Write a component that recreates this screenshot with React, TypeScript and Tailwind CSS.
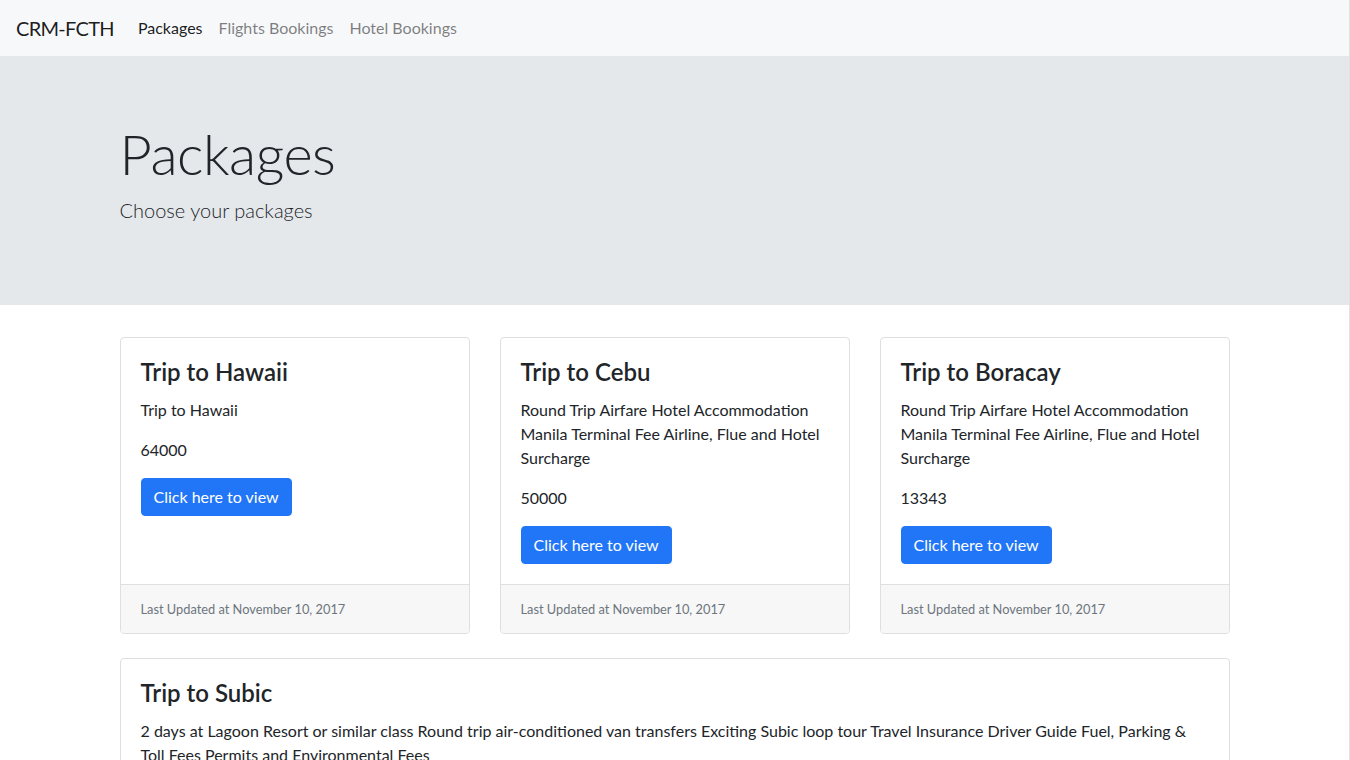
const packages = [
  {
    title: "Trip to Hawaii",
    description: "Trip to Hawaii",
    price: "64000",
  },
  {
    title: "Trip to Cebu",
    description:
      "Round Trip Airfare Hotel Accommodation Manila Terminal Fee Airline, Flue and Hotel Surcharge",
    price: "50000",
  },
  {
    title: "Trip to Boracay",
    description:
      "Round Trip Airfare Hotel Accommodation Manila Terminal Fee Airline, Flue and Hotel Surcharge",
    price: "13343",
  },
];

function PackageCard({ title, description, price }: { title: string; description: string; price: string }) {
  return (
    <div className="flex flex-col rounded border border-[#dfdfdf] bg-white">
      <div className="flex-1 p-5">
        <h4 className="mb-3 text-2xl font-semibold leading-7 text-[#212529]">{title}</h4>
        <p className="mb-4 text-base leading-6">{description}</p>
        <p className="mb-4 text-base leading-6">{price}</p>
        <button className="rounded border border-[#2176f7] bg-[#2176f7] px-3 py-1.5 text-base leading-6 text-white">
          Click here to view
        </button>
      </div>
      {/* footer */}
      <div className="rounded-b border-t border-[#dfdfdf] bg-[#f7f7f7] px-5 py-3 text-[12.8px] leading-6 text-[#6c757d]">
        Last Updated at November 10, 2017
      </div>
    </div>
  );
}

export default function App() {
  return (
    <div className="min-h-screen w-full border-r border-[#e2e2e2] bg-white font-['Lato',sans-serif] text-[#212529]">
      <nav className="flex h-14 items-center bg-[#f7f8fa] px-4">
        <a className="mr-4 py-[5px] text-xl leading-[30px] tracking-[-0.7px] text-black/90">CRM-FCTH</a>
        <ul className="flex">
          <li><a className="block px-2 py-2 text-base leading-6 text-black/90">Packages</a></li>
          <li><a className="block px-2 py-2 text-base leading-6 text-black/50">Flights Bookings</a></li>
          <li><a className="block px-2 py-2 text-base leading-6 text-black/50">Hotel Bookings</a></li>
        </ul>
      </nav>

      <div className="mb-8 bg-[#e5e8eb] py-16">
        <div className="mx-auto max-w-[1140px] px-[15px]">
          <h1 className="mb-2 text-[56px] font-light leading-[1.2] tracking-[-0.5px]">Packages</h1>
          <p className="mb-4 text-xl font-light leading-[30px]">Choose your packages</p>
        </div>
      </div>

      <div className="mx-auto max-w-[1140px] px-[15px]">
        <div className="grid grid-cols-3 gap-[30px]">
          {packages.map((p) => (
            <PackageCard key={p.title} {...p} />
          ))}
        </div>

        <div className="mt-6 rounded border border-[#dfdfdf] bg-white">
          <div className="p-5">
            <h4 className="mb-3 text-2xl font-semibold leading-7">Trip to Subic</h4>
            <p className="mb-4 text-base leading-6">
              2 days at Lagoon Resort or similar class Round trip air-conditioned van transfers Exciting Subic loop tour
              Travel Insurance Driver Guide Fuel, Parking &amp; Toll Fees Permits and Environmental Fees
            </p>
            <p className="mb-4 text-base leading-6">3500</p>
          </div>
        </div>
      </div>
    </div>
  );
}
